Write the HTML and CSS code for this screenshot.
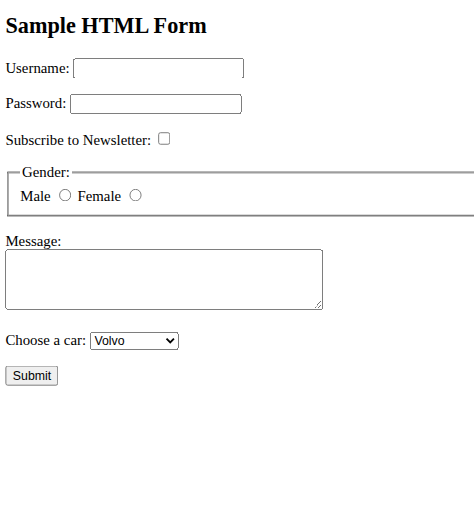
FILE: index.html
```html
<!DOCTYPE html>
<html>
<head>
<meta charset="utf-8">
<title>Sample HTML Form</title>
<link rel="stylesheet" href="styles.css">
</head>
<body>
<div class="page">
<h2 class="title">Sample HTML Form</h2>
<form class="form">
  <p><label for="username">Username:</label> <input type="text" id="username" name="username"></p>
  <p><label for="password">Password:</label> <input type="password" id="password" name="password"></p>
  <p><label for="subscribe">Subscribe to Newsletter:</label> <input type="checkbox" id="subscribe" name="subscribe"></p>
  <fieldset class="gender">
    <legend>Gender:</legend>
    <label for="male">Male</label> <input type="radio" id="male" name="gender" value="male">
    <label for="female">Female</label> <input type="radio" id="female" name="gender" value="female">
  </fieldset>
  <p class="message-row"><label for="message">Message:</label><br><textarea class="message" id="message" name="message" rows="4" cols="40"></textarea></p>
  <p><label for="car">Choose a car:</label> <select class="car" id="car" name="car"><option>Volvo</option><option>Saab</option><option>Mercedes</option><option>Audi</option></select></p>
  <p><input type="submit" value="Submit"></p>
</form>
</div>
</body>
</html>
```

FILE: styles.css
```css
html {
  overflow: hidden;
  background: #fff;
}
body {
  margin: 0;
  font-family: "Liberation Serif", serif;
}
.page {
  display: flow-root;
  width: 760px;
  padding: 0 8px;
  transform-origin: 0 0;
  transform: translate(-2px, -6px) scale(0.926, 0.96);
}
.gender {
  border: 2px groove #a0a0a0;
}
.message-row {
  margin-bottom: 19px;
}
.message {
  height: 57px;
}
.car {
  width: 96px;
}
```
